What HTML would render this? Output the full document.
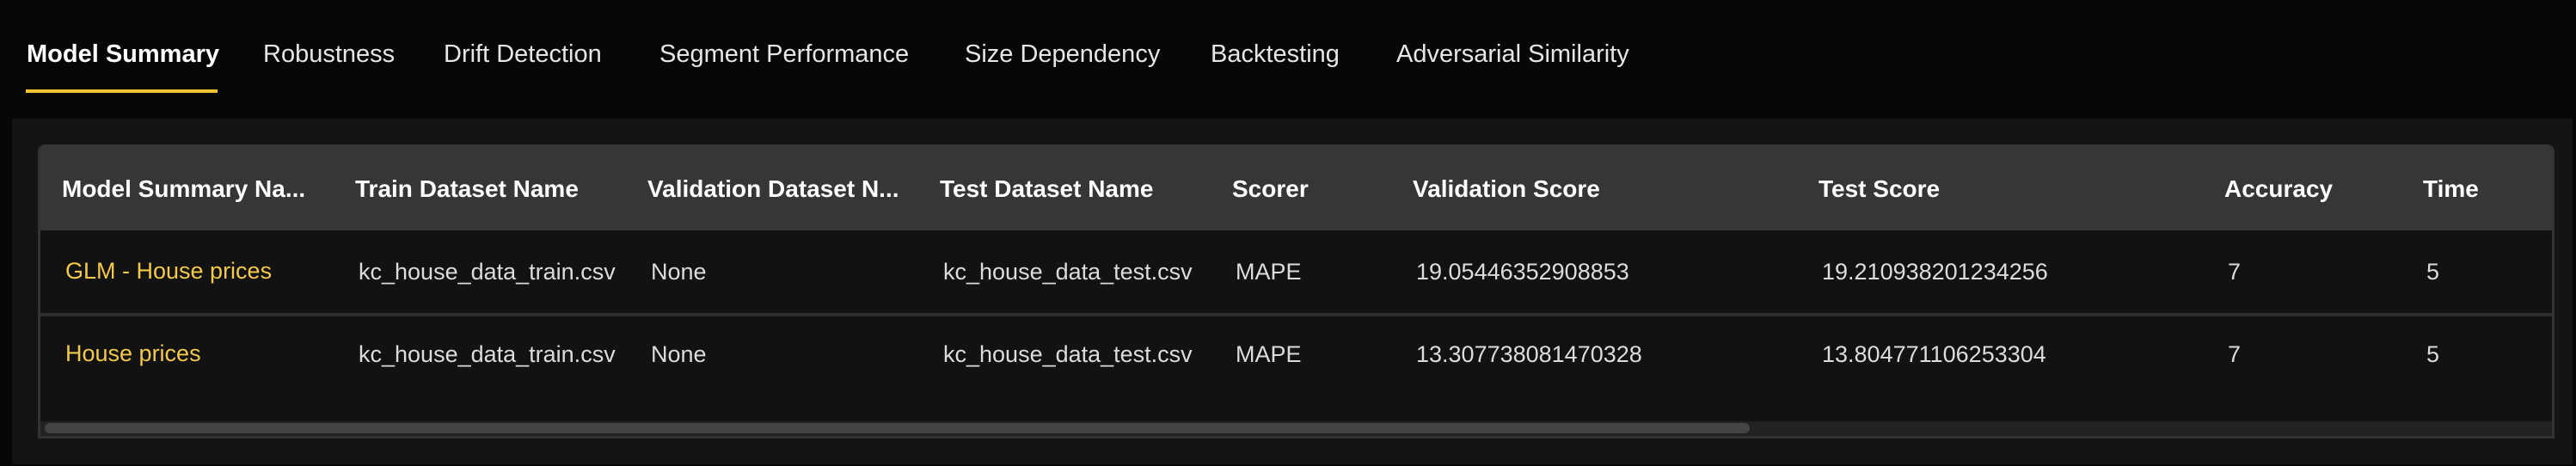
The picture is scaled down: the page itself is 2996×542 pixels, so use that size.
<!DOCTYPE html>
<html><head><meta charset="utf-8"><style>
*{margin:0;padding:0;box-sizing:border-box}
body{width:2996px;height:542px;background:#070707;font-family:"Liberation Sans",sans-serif;position:relative;overflow:hidden}
.t{position:absolute;top:47px;font-size:29px;color:#e6e6e6;white-space:nowrap}
.ul{position:absolute;left:30px;top:104px;width:223px;height:4px;background:#f2c331}
.panel{position:absolute;left:14px;top:138px;width:2978px;height:402px;background:#141414}
.card{position:absolute;left:44px;top:168px;width:2927px;height:342px;background:#121212;border:3px solid #333;border-top:none;border-radius:8px 8px 0 0;overflow:hidden}
.head{position:absolute;left:0;top:0;right:0;height:100px;background:#363636}
.c{position:absolute;white-space:nowrap;overflow:hidden}
.h{font-size:28px;font-weight:bold;color:#fff;top:36px}
.r{font-size:27px;color:#dcdcdc}
.y{color:#f2c94c}
.div{position:absolute;left:0;right:0;top:196px;height:4px;background:#2e2e2e}
.track{position:absolute;left:0;right:0;top:322px;height:17px;background:#222}
.thumb{position:absolute;left:5px;top:324px;width:1983px;height:12px;border-radius:6px;background:#444}
</style></head><body>
<div class="t" style="left:31px;font-weight:bold;color:#fff">Model Summary</div>
<div class="t" style="left:306px">Robustness</div>
<div class="t" style="left:516px">Drift Detection</div>
<div class="t" style="left:767px">Segment Performance</div>
<div class="t" style="left:1122px">Size Dependency</div>
<div class="t" style="left:1408px">Backtesting</div>
<div class="t" style="left:1624px">Adversarial Similarity</div>
<div class="ul"></div>
<div class="panel"></div>
<div class="card">
<div class="head"></div>
<div class="c h" style="left:25px;width:340px">Model Summary Na...</div>
<div class="c h" style="left:366px">Train Dataset Name</div>
<div class="c h" style="left:706px;width:320px">Validation Dataset N...</div>
<div class="c h" style="left:1046px">Test Dataset Name</div>
<div class="c h" style="left:1386px">Scorer</div>
<div class="c h" style="left:1596px">Validation Score</div>
<div class="c h" style="left:2068px">Test Score</div>
<div class="c h" style="left:2540px">Accuracy</div>
<div class="c h" style="left:2771px">Time</div>

<div class="c r y" style="left:29px;top:132px">GLM - House prices</div>
<div class="c r" style="left:370px;top:133px;width:315px">kc_house_data_train.csv</div>
<div class="c r" style="left:710px;top:133px">None</div>
<div class="c r" style="left:1050px;top:133px">kc_house_data_test.csv</div>
<div class="c r" style="left:1390px;top:133px">MAPE</div>
<div class="c r" style="left:1600px;top:133px">19.05446352908853</div>
<div class="c r" style="left:2072px;top:133px">19.210938201234256</div>
<div class="c r" style="left:2544px;top:133px">7</div>
<div class="c r" style="left:2775px;top:133px">5</div>
<div class="div"></div>
<div class="c r y" style="left:29px;top:228px">House prices</div>
<div class="c r" style="left:370px;top:229px;width:315px">kc_house_data_train.csv</div>
<div class="c r" style="left:710px;top:229px">None</div>
<div class="c r" style="left:1050px;top:229px">kc_house_data_test.csv</div>
<div class="c r" style="left:1390px;top:229px">MAPE</div>
<div class="c r" style="left:1600px;top:229px">13.307738081470328</div>
<div class="c r" style="left:2072px;top:229px">13.804771106253304</div>
<div class="c r" style="left:2544px;top:229px">7</div>
<div class="c r" style="left:2775px;top:229px">5</div>
<div class="track"></div>
<div class="thumb"></div>
</div>
</body></html>
